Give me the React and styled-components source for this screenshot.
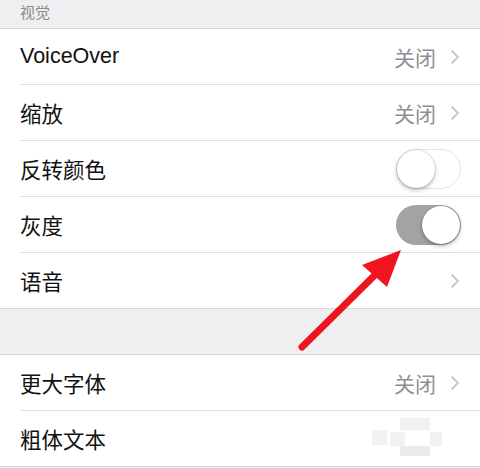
import React from "react";
import styled, { createGlobalStyle } from "styled-components";

const GlobalStyle = createGlobalStyle`
  html, body {
    margin: 0;
    padding: 0;
    background: #efeff1;
  }
  body {
    font-family: "Liberation Sans", "Noto Sans CJK SC", sans-serif;
  }
`;

const Page = styled.div`
  position: relative;
  width: 480px;
  height: 468px;
  overflow: hidden;
  background: #efeff1;
`;

const SectionHeader = styled.div`
  height: 29px;
  padding-left: 20px;
  box-sizing: border-box;
  padding-bottom: 5px;
  display: flex;
  align-items: center;
  font-size: 15px;
  color: #8a8a8f;
  border-bottom: 1px solid #d6d6da;
`;

const Group = styled.div`
  background: #fff;
  border-bottom: 1px solid #d6d6da;
  border-top: ${(p) => (p.$top ? "1px solid #d6d6da" : "none")};
`;

const Row = styled.div`
  height: 55px;
  margin-left: 20px;
  padding-right: 20px;
  display: flex;
  align-items: center;
  border-bottom: ${(p) => (p.$last ? "none" : "1px solid #e0e0e3")};
`;

const Label = styled.div`
  flex: 1;
  font-size: 21.5px;
  color: #111;
`;

const Value = styled.span`
  font-size: 21px;
  color: #8e8e93;
  margin-right: 14px;
`;

const Chevron = styled.svg`
  width: 10px;
  height: 16px;
  flex: none;
`;

const Switch = styled.div`
  position: relative;
  width: 65px;
  height: 40px;
  border-radius: 20px;
  box-sizing: border-box;
  flex: none;
  margin-right: -1px;
  background: ${(p) => (p.$on ? "#a3a3a3" : "#fff")};
  border: ${(p) => (p.$on ? "none" : "1.5px solid #e3e3e3")};
`;

const Knob = styled.div`
  position: absolute;
  top: ${(p) => (p.$on ? "1px" : "0")};
  left: ${(p) => (p.$on ? "26px" : "0")};
  width: 38px;
  height: 38px;
  border-radius: 50%;
  background: #fff;
  box-shadow: 0 2px 4px rgba(0, 0, 0, 0.3), 0 0 0 0.5px rgba(0, 0, 0, 0.12);
`;

const Gap = styled.div`
  height: 45px;
`;

const Overlay = styled.svg`
  position: absolute;
  left: 0;
  top: 0;
  pointer-events: none;
`;

const ChevronIcon = () => (
  <Chevron viewBox="0 0 10 16">
    <path d="M1.5 1.5 L8 8 L1.5 14.5" fill="none" stroke="#c7c7cc" strokeWidth="1.8" />
  </Chevron>
);

const Item = ({ label, value, toggle, on, last, chevron }) => (
  <Row $last={last}>
    <Label>{label}</Label>
    {value && <Value>{value}</Value>}
    {chevron && <ChevronIcon />}
    {toggle && (
      <Switch $on={on}>
        <Knob $on={on} />
      </Switch>
    )}
  </Row>
);

export default function App() {
  return (
    <Page>
      <GlobalStyle />
      <SectionHeader>视觉</SectionHeader>
      <Group>
        <Item label="VoiceOver" value="关闭" chevron />
        <Item label="缩放" value="关闭" chevron />
        <Item label="反转颜色" toggle />
        <Item label="灰度" toggle on />
        <Item label="语音" chevron last />
      </Group>
      <Gap />
      <Group $top>
        <Item label="更大字体" value="关闭" chevron />
        <Item label="粗体文本" last />
      </Group>
      <Overlay width="480" height="468" viewBox="0 0 480 468">
        <line x1="302" y1="347" x2="378" y2="272" stroke="#f0141e" strokeWidth="7" strokeLinecap="round" />
        <polygon points="401,250 362,265 387,287" fill="#f0141e" />
        <g fill="#e9e9e9" opacity="0.55">
          <rect x="372" y="430" width="15" height="15" />
          <rect x="400" y="418" width="30" height="12" />
          <rect x="390" y="432" width="15" height="14" />
          <rect x="400" y="446" width="30" height="10" fill="#dcdcdc" />
          <rect x="430" y="432" width="12" height="14" />
        </g>
      </Overlay>
    </Page>
  );
}
